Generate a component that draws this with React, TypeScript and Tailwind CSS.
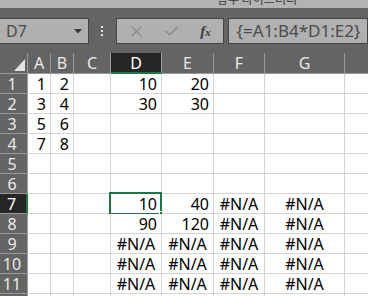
const COLS = [
  { key: "", w: "w-[28px]" },
  { key: "A", w: "w-[23px]" },
  { key: "B", w: "w-[23px]" },
  { key: "C", w: "w-[37px]" },
  { key: "D", w: "w-[51px]" },
  { key: "E", w: "w-[52px]" },
  { key: "F", w: "w-[51px]" },
  { key: "G", w: "w-[80px]" },
  { key: "H", w: "w-[80px]" },
];

const NA = "#N/A";

// row number -> values for A..H
const DATA: Record<number, (string | number | null)[]> = {
  1: [1, 2, null, 10, 20, null, null, null],
  2: [3, 4, null, 30, 30, null, null, null],
  3: [5, 6, null, null, null, null, null, null],
  4: [7, 8, null, null, null, null, null, null],
  7: [null, null, null, 10, 40, NA, NA, null],
  8: [null, null, null, 90, 120, NA, NA, null],
  9: [null, null, null, NA, NA, NA, NA, null],
  10: [null, null, null, NA, NA, NA, NA, null],
  11: [null, null, null, NA, NA, NA, NA, null],
};

const font = "font-['Noto_Sans','Liberation_Sans',sans-serif]";

function FormulaBar() {
  return (
    <div className="bg-[#646464]">
      {/* ribbon edge */}
      <div className="relative h-[8px] overflow-hidden bg-[#b3b3b3]">
        <span className="absolute left-[217px] top-[-8px] font-['Noto_Sans_CJK_KR',sans-serif] text-[12px] leading-[14px] text-[#3c3c3c]">
          함수 라이브러리
        </span>
      </div>
      <div className="flex h-[45px] items-start pt-[10px]">
        <div className="-ml-px flex h-[26px] w-[101px] items-center justify-between border border-[#444] bg-[#b0b0b0] pl-[6px] pr-[6px]">
          <span className={`${font} text-[16px] text-[#4b4b4b]`}>D7</span>
          <svg width="8" height="5" viewBox="0 0 8 5">
            <path d="M0 0h8L4 4.5z" fill="#3a3a3a" />
          </svg>
        </div>
        <div className="flex w-[31px] flex-col items-center gap-[2px] pt-[8px]">
          <span className="h-[2px] w-[2px] bg-[#e6e6e6]" />
          <span className="h-[2px] w-[2px] bg-[#e6e6e6]" />
          <span className="h-[2px] w-[2px] bg-[#e6e6e6]" />
        </div>
        <div className="flex h-[26px] w-[110px] items-center border border-[#444] bg-[#b0b0b0]">
          <div className="flex w-[38px] justify-center pl-[1px]">
            <svg width="11" height="11" viewBox="0 0 11 11">
              <path d="M0.5 0.5l10 10M10.5 0.5l-10 10" stroke="#8c8c8c" strokeWidth="1.3" />
            </svg>
          </div>
          <div className="flex w-[34px] justify-center">
            <svg width="13" height="10" viewBox="0 0 13 10">
              <path d="M0.8 5l4 4L12.5 0.8" stroke="#8c8c8c" strokeWidth="1.6" fill="none" />
            </svg>
          </div>
          <div className="flex w-[34px] justify-center">
            <span className="font-['Liberation_Serif',serif] text-[15px] font-bold italic leading-none text-[#3a3a3a]">
              f<span className="text-[11px]">x</span>
            </span>
          </div>
        </div>
        <div className="ml-[4px] flex h-[26px] w-[160px] items-center border border-[#444] bg-[#b0b0b0] pl-[8px]">
          <span className={`${font} text-[17px] text-[#4b4b4b]`}>{"{=A1:B4*D1:E2}"}</span>
        </div>
      </div>
    </div>
  );
}

function HeaderRow() {
  return (
    <div className="flex h-[21px]">
      {COLS.map((c, i) => {
        if (i === 0) {
          return (
            <div
              key="corner"
              className="relative h-[21px] w-[28px] shrink-0 border-r border-b border-[#9a9a9a] bg-[#646464]"
            >
              <svg className="absolute right-[2px] bottom-[2px]" width="11" height="12" viewBox="0 0 11 12">
                <path d="M11 0V12H0z" fill="#e4e4e4" />
              </svg>
            </div>
          );
        }
        const sel = c.key === "D";
        return (
          <div
            key={c.key}
            className={`${c.w} flex h-[21px] shrink-0 items-center justify-center border-r ${
              sel
                ? "border-b-2 border-r-[#9a9a9a] border-b-[#217346] bg-[#262626] text-white"
                : "border-b border-[#9a9a9a] bg-[#646464] text-[#eaeaea]"
            } ${font} text-[16px]`}
          >
            {c.key === "H" ? "" : c.key}
          </div>
        );
      })}
    </div>
  );
}

function Row({ n }: { n: number }) {
  const vals = DATA[n] ?? [];
  const sel = n === 7;
  return (
    <div className="flex h-[20px]">
      <div
        className={`flex h-[20px] w-[28px] shrink-0 items-center justify-center border-b pr-[3px] ${font} text-[16px] ${
          sel
            ? "border-r-2 border-b-[#9a9a9a] border-r-[#217346] bg-[#262626] text-white"
            : "border-r border-[#9a9a9a] bg-[#646464] text-[#eaeaea]"
        }`}
      >
        {n}
      </div>
      {COLS.slice(1).map((c, i) => {
        const v = vals[i];
        const isErr = v === NA;
        const active = sel && c.key === "D";
        return (
          <div
            key={c.key}
            className={`${c.w} relative flex h-[20px] shrink-0 items-center border-r border-b border-[#d4d4d4] bg-white ${
              isErr ? "justify-center" : "justify-end pr-[4px]"
            } ${font} text-[16px] text-black`}
          >
            {v}
            {active && (
              <>
                <div className="absolute -top-[2px] -left-[2px] h-[23px] w-[53px] border-2 border-[#217346]" />
                <div className="absolute -right-[4px] -bottom-[4px] h-[6px] w-[6px] border border-white bg-[#217346]" />
              </>
            )}
          </div>
        );
      })}
    </div>
  );
}

export default function App() {
  const rows = Array.from({ length: 12 }, (_, i) => i + 1);
  return (
    <div className="h-[296px] w-[368px] overflow-hidden bg-white">
      <FormulaBar />
      <div className="w-[425px]">
        <HeaderRow />
        {rows.map((n) => (
          <Row key={n} n={n} />
        ))}
      </div>
    </div>
  );
}
